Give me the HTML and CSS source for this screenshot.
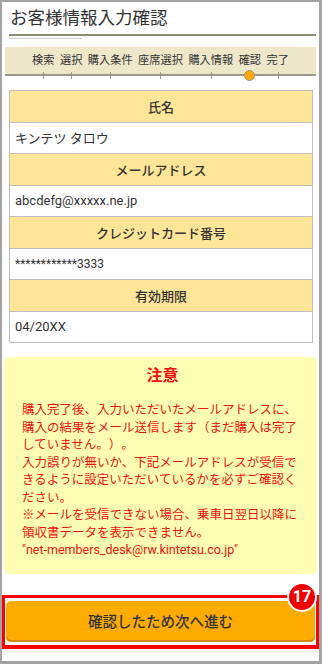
FILE: index.html
```html
<!DOCTYPE html>
<html lang="ja">
<head>
    <meta charset="UTF-8">
    <meta name="viewport" content="width=device-width, initial-scale=1.0">
    <title>お客様情報入力確認</title>
    <link rel="stylesheet" href="styles.css">
</head>
<body>

    <div class="frame">
        <h1 class="page-title">お客様情報入力確認</h1>
        <div class="title-rule"></div>
        <div class="title-rule-sub"></div>

        <div class="steps">
            <span class="step">検索</span>
            <span class="step">選択</span>
            <span class="step">購入条件</span>
            <span class="step">座席選択</span>
            <span class="step">購入情報</span>
            <span class="step current">確認</span>
            <span class="step">完了</span>
        </div>

        <table class="info-table">
            <tr><th>氏名</th></tr>
            <tr><td>キンテツ タロウ</td></tr>
            <tr><th>メールアドレス</th></tr>
            <tr><td>abcdefg@xxxxx.ne.jp</td></tr>
            <tr><th>クレジットカード番号</th></tr>
            <tr><td class="masked">************3333</td></tr>
            <tr><th>有効期限</th></tr>
            <tr><td>04/20XX</td></tr>
        </table>

        <div class="notice">
            <div class="notice-title">注意</div>
            <p>購入完了後、入力いただいたメールアドレスに、購入の結果をメール送信します（まだ購入は完了していません。）。</p>
            <p>入力誤りが無いか、下記メールアドレスが受信できるように設定いただいているかを必ずご確認ください。</p>
            <p>※メールを受信できない場合、乗車日翌日以降に領収書データを表示できません。</p>
            <p class="mail">"net-members_desk@rw.kintetsu.co.jp"</p>
        </div>

        <div class="action">
            <button class="next-button">確認したため次へ進む</button>
            <span class="badge">17</span>
        </div>
    </div>

</body>
</html>
```

FILE: styles.css
```css
html, body {
    margin: 0;
    padding: 0;
}

body {
    font-family: Roboto, "Noto Sans CJK JP", sans-serif;
    color: #333;
    background-color: #fff;
    text-spacing-trim: space-all;
}

.frame {
    box-sizing: border-box;
    width: 322px;
    height: 664px;
    border: solid #a3a3a3;
    border-width: 2px 3px 3px 2px;
    overflow: hidden;
}

.page-title {
    margin: 0;
    padding: 4px 0 0 8px;
    font-size: 17.5px;
    line-height: 24px;
    font-weight: normal;
    color: #333;
}

.title-rule {
    height: 2px;
    margin: 4px 3px 0 7px;
    background-color: #8f8c7c;
}

.title-rule-sub {
    width: 73px;
    height: 1px;
    margin: 2px 0 0 7px;
    background-color: #c9c9c9;
}

.steps {
    display: flex;
    justify-content: center;
    gap: 5.5px;
    height: 27px;
    margin: 8px 3px 0 3px;
    background-color: #eee7ca;
    border-bottom: 2px solid #9a978a;
}

.step {
    position: relative;
    font-size: 11.2px;
    line-height: 27px;
    color: #333;
}

.step::after {
    content: "";
    position: absolute;
    left: 50%;
    bottom: -5px;
    width: 1px;
    height: 7px;
    background-color: #9a978a;
}

.step.current::after {
    bottom: -7px;
    width: 9px;
    height: 9px;
    margin-left: -5.5px;
    border-radius: 50%;
    border: 1px solid #9a978a;
    background-color: #ffa800;
}

.info-table {
    width: 304px;
    margin: 14px 0 0 7px;
    border-collapse: collapse;
    border: 1px solid #aaa;
}

.info-table th,
.info-table td {
    height: 30.5px;
    padding: 0;
    border: 1px solid #bdbdbd;
    font-size: 13px;
    color: #333;
}

.info-table th {
    background-color: #ffe598;
    font-weight: 500;
    text-align: center;
}

.info-table td {
    background-color: #fff;
    padding-left: 5px;
    text-align: left;
}

.info-table td.masked {
    font-size: 12px;
}

.notice {
    margin: 14px 2px 0 2px;
    padding: 8px 14px 15px 18px;
    background-color: #ffffb3;
    border-radius: 5px;
    color: #ee1111;
}

.notice-title {
    font-size: 16px;
    line-height: 22px;
    font-weight: bold;
    text-align: center;
    margin-bottom: 14px;
}

.notice p {
    margin: 0;
    font-size: 12.5px;
    line-height: 17.5px;
}

.notice p.mail {
    font-size: 12.5px;
}

.action {
    position: relative;
    margin: 21px 0 0 0;
    padding: 3px 1px;
    border: 3px solid #ff0000;
    border-bottom-width: 4px;
}

.next-button {
    display: block;
    width: 100%;
    height: 41px;
    padding: 0 0 2px 0;
    border: none;
    border-radius: 5px;
    background-color: #ffab00;
    box-shadow: inset 0 -2px 0 #cf8a00;
    font-family: Roboto, "Noto Sans CJK JP", sans-serif;
    font-size: 14.5px;
    font-weight: 500;
    color: #333;
}

.badge {
    position: absolute;
    top: -16px;
    right: -1px;
    width: 26px;
    height: 26px;
    border: 2px solid #fff;
    border-radius: 50%;
    background-color: #ee0000;
    color: #fff;
    font-size: 16px;
    font-weight: bold;
    line-height: 26px;
    text-align: center;
}
```
